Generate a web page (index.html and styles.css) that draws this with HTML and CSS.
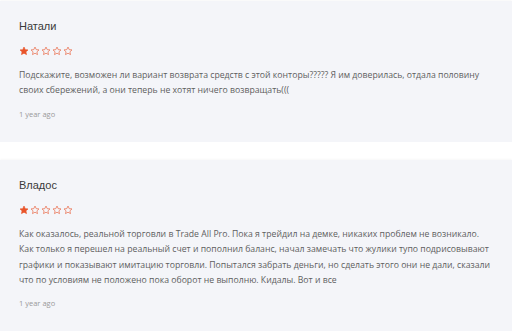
FILE: index.html
```html
<!DOCTYPE html>
<html lang="ru">
<head>
    <meta charset="UTF-8">
    <meta name="viewport" content="width=device-width, initial-scale=1.0">
    <title>Отзывы</title>
    <link rel="stylesheet" href="styles.css">
</head>
<body>
    <div class="reviews">
        <div class="review">
            <div class="review-name">Натали</div>
            <div class="review-stars">
                <svg class="star filled" viewBox="0 0 24 24"><path d="M12 2.5l2.9 6.2 6.7.7-5 4.6 1.4 6.6L12 17.3l-6 3.3 1.4-6.6-5-4.6 6.7-.7z"/></svg>
                <svg class="star" viewBox="0 0 24 24"><path d="M12 2.5l2.9 6.2 6.7.7-5 4.6 1.4 6.6L12 17.3l-6 3.3 1.4-6.6-5-4.6 6.7-.7z"/></svg>
                <svg class="star" viewBox="0 0 24 24"><path d="M12 2.5l2.9 6.2 6.7.7-5 4.6 1.4 6.6L12 17.3l-6 3.3 1.4-6.6-5-4.6 6.7-.7z"/></svg>
                <svg class="star" viewBox="0 0 24 24"><path d="M12 2.5l2.9 6.2 6.7.7-5 4.6 1.4 6.6L12 17.3l-6 3.3 1.4-6.6-5-4.6 6.7-.7z"/></svg>
                <svg class="star" viewBox="0 0 24 24"><path d="M12 2.5l2.9 6.2 6.7.7-5 4.6 1.4 6.6L12 17.3l-6 3.3 1.4-6.6-5-4.6 6.7-.7z"/></svg>
            </div>
            <p class="review-text">Подскажите, возможен ли вариант возврата средств с этой конторы????? Я им доверилась, отдала половину<br>своих сбережений, а они теперь не хотят ничего возвращать(((</p>
            <div class="review-date">1 year ago</div>
        </div>
        <div class="review">
            <div class="review-name">Владос</div>
            <div class="review-stars">
                <svg class="star filled" viewBox="0 0 24 24"><path d="M12 2.5l2.9 6.2 6.7.7-5 4.6 1.4 6.6L12 17.3l-6 3.3 1.4-6.6-5-4.6 6.7-.7z"/></svg>
                <svg class="star" viewBox="0 0 24 24"><path d="M12 2.5l2.9 6.2 6.7.7-5 4.6 1.4 6.6L12 17.3l-6 3.3 1.4-6.6-5-4.6 6.7-.7z"/></svg>
                <svg class="star" viewBox="0 0 24 24"><path d="M12 2.5l2.9 6.2 6.7.7-5 4.6 1.4 6.6L12 17.3l-6 3.3 1.4-6.6-5-4.6 6.7-.7z"/></svg>
                <svg class="star" viewBox="0 0 24 24"><path d="M12 2.5l2.9 6.2 6.7.7-5 4.6 1.4 6.6L12 17.3l-6 3.3 1.4-6.6-5-4.6 6.7-.7z"/></svg>
                <svg class="star" viewBox="0 0 24 24"><path d="M12 2.5l2.9 6.2 6.7.7-5 4.6 1.4 6.6L12 17.3l-6 3.3 1.4-6.6-5-4.6 6.7-.7z"/></svg>
            </div>
            <p class="review-text">Как оказалось, реальной торговли в Trade All Pro. Пока я трейдил на демке, никаких проблем не возникало.<br>Как только я перешел на реальный счет и пополнил баланс, начал замечать что жулики тупо подрисовывают<br>графики и показывают имитацию торговли. Попытался забрать деньги, но сделать этого они не дали, сказали<br>что по условиям не положено пока оборот не выполню. Кидалы. Вот и все</p>
            <div class="review-date">1 year ago</div>
        </div>
    </div>
</body>
</html>
```

FILE: styles.css
```css
body {
    margin: 0;
    padding: 0;
    background-color: #fff;
    font-family: 'Open Sans', sans-serif;
    overflow: hidden;
}
.reviews {
    display: flex;
    flex-direction: column;
    gap: 18px;
    padding-top: 1px;
}
.review {
    background-color: #f4f5f9;
    padding: 17px 0 22px 19px;
    box-shadow: 0 -1px 2px rgba(0, 0, 0, 0.03);
}
.review-name {
    font-family: 'Liberation Sans', Arial, sans-serif;
    font-size: 11px;
    line-height: 16px;
    color: #3a3a3a;
}
.review-stars {
    display: flex;
    gap: 1px;
    margin-top: 12px;
    height: 10px;
}
.star {
    width: 10px;
    height: 10px;
    fill: none;
    stroke: #e8603c;
    stroke-width: 1.6;
    stroke-linejoin: round;
}
.star.filled {
    fill: #e9542a;
    stroke: #e9542a;
}
.review-text {
    margin: 12px 0 0 0;
    font-size: 8.7px;
    line-height: 15.4px;
    color: #5e5e5e;
    white-space: nowrap;
}
.review-date {
    margin-top: 9px;
    font-size: 7.5px;
    line-height: 12px;
    color: #9a9a9a;
}
```
